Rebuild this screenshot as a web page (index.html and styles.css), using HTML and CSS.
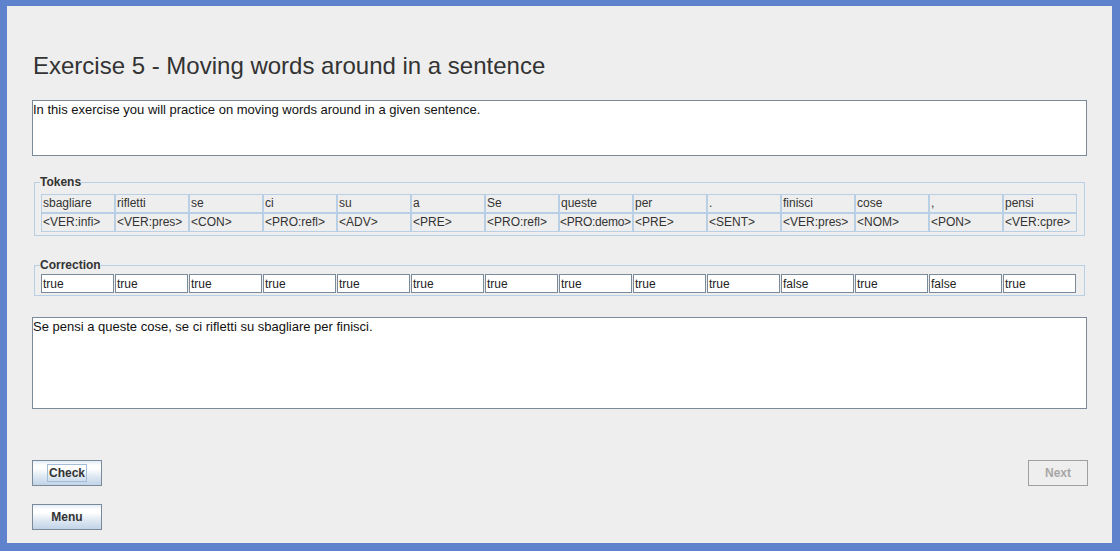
FILE: index.html
```html
<!DOCTYPE html>
<html>
<head>
<meta charset="utf-8">
<link rel="stylesheet" href="styles.css">
</head>
<body>
<div class="window">
  <h1 class="title">Exercise 5 - Moving words around in a sentence</h1>
  <div class="textbox desc">In this exercise you will practice on moving words around in a given sentence.</div>

  <fieldset class="group tokens">
    <legend>Tokens</legend>
    <div class="grid">
      <div class="cell">sbagliare</div><div class="cell">rifletti</div><div class="cell">se</div><div class="cell">ci</div><div class="cell">su</div><div class="cell">a</div><div class="cell">Se</div><div class="cell">queste</div><div class="cell">per</div><div class="cell">.</div><div class="cell">finisci</div><div class="cell">cose</div><div class="cell">,</div><div class="cell">pensi</div>
      <div class="cell">&lt;VER:infi&gt;</div><div class="cell">&lt;VER:pres&gt;</div><div class="cell">&lt;CON&gt;</div><div class="cell">&lt;PRO:refl&gt;</div><div class="cell">&lt;ADV&gt;</div><div class="cell">&lt;PRE&gt;</div><div class="cell">&lt;PRO:refl&gt;</div><div class="cell tight">&lt;PRO:demo&gt;</div><div class="cell">&lt;PRE&gt;</div><div class="cell">&lt;SENT&gt;</div><div class="cell">&lt;VER:pres&gt;</div><div class="cell">&lt;NOM&gt;</div><div class="cell">&lt;PON&gt;</div><div class="cell">&lt;VER:cpre&gt;</div>
    </div>
  </fieldset>

  <fieldset class="group correction">
    <legend>Correction</legend>
    <div class="grid">
      <div class="field">true</div><div class="field">true</div><div class="field">true</div><div class="field">true</div><div class="field">true</div><div class="field">true</div><div class="field">true</div><div class="field">true</div><div class="field">true</div><div class="field">true</div><div class="field">false</div><div class="field">true</div><div class="field">false</div><div class="field">true</div>
    </div>
  </fieldset>

  <div class="textbox answer">Se pensi a queste cose, se ci rifletti su sbagliare per finisci.</div>

  <div class="buttons">
    <div class="row">
      <button class="btn check"><span class="focus">Check</span></button>
      <button class="btn next" disabled>Next</button>
    </div>
    <div class="row">
      <button class="btn menu">Menu</button>
    </div>
  </div>
</div>
</body>
</html>
```

FILE: styles.css
```css
html, body {
  margin: 0;
  padding: 0;
}
body {
  width: 1120px;
  height: 551px;
  overflow: hidden;
  font-family: "Liberation Sans", Arial, sans-serif;
}
.window {
  box-sizing: border-box;
  width: 1120px;
  height: 551px;
  background: #eeeeee;
  border-style: solid;
  border-color: #5e82cc;
  border-width: 6px 8px 8px 7px;
  padding: 46px 25px 0 25px;
  display: flex;
  flex-direction: column;
}
.title {
  margin: 0;
  font-weight: normal;
  font-size: 24px;
  line-height: 28px;
  height: 28px;
  color: #333333;
  padding-left: 1px;
}
.textbox {
  box-sizing: border-box;
  background: #ffffff;
  border: 1px solid #7a8a99;
  font-size: 13px;
  line-height: 15px;
  color: #111111;
  padding: 1px 1px 0 0;
}
.desc {
  margin-top: 20px;
  height: 56px;
}
.answer {
  margin-top: 21px;
  height: 92px;
}
.group {
  margin: 0 2px;
  border: 1px solid #b8cfe5;
  padding: 5px 6px 3px 6px;
  min-width: 0;
}
.group legend {
  font-size: 12px;
  font-weight: bold;
  line-height: 14px;
  color: #333333;
  padding: 0;
  margin-left: -1px;
}
.tokens {
  margin-top: 19px;
}
.correction {
  margin-top: 22px;
  padding-top: 2px;
  padding-bottom: 2px;
}
.grid {
  display: grid;
  grid-template-columns: repeat(14, 74px);
}
.cell {
  box-sizing: border-box;
  height: 19px;
  border: 1px solid #b8cfe5;
  font-size: 12px;
  line-height: 17px;
  color: #333333;
  padding-left: 1px;
  white-space: nowrap;
  overflow: hidden;
}
.cell.tight {
  padding-left: 0;
  letter-spacing: -0.25px;
}
.field {
  box-sizing: border-box;
  width: 73px;
  height: 19px;
  background: #ffffff;
  border: 1px solid #7a8a99;
  font-size: 12px;
  line-height: 17px;
  color: #222222;
  padding-left: 1px;
  padding-top: 1px;
}
.buttons {
  margin-top: 51px;
  display: flex;
  flex-direction: column;
  gap: 18px;
}
.row {
  display: flex;
  justify-content: space-between;
}
.btn {
  box-sizing: border-box;
  height: 26px;
  border: 1px solid #7a8a99;
  border-radius: 0;
  background: linear-gradient(to bottom, #e3ecf6 0%, #ffffff 18%, #ffffff 32%, #dde7f2 65%, #c2d4e8 100%);
  font-family: "Liberation Sans", Arial, sans-serif;
  font-size: 12px;
  font-weight: bold;
  color: #333333;
  padding: 0;
  display: flex;
  align-items: center;
  justify-content: center;
}
.check, .menu {
  width: 70px;
}
.focus {
  border: 1px solid #a3bdd9;
  padding: 0 1px;
  line-height: 16px;
}
.next {
  width: 60px;
  background: #eeeeee;
  border-color: #a0a0a0;
  color: #a6a6a6;
  margin-right: -1px;
}
```
